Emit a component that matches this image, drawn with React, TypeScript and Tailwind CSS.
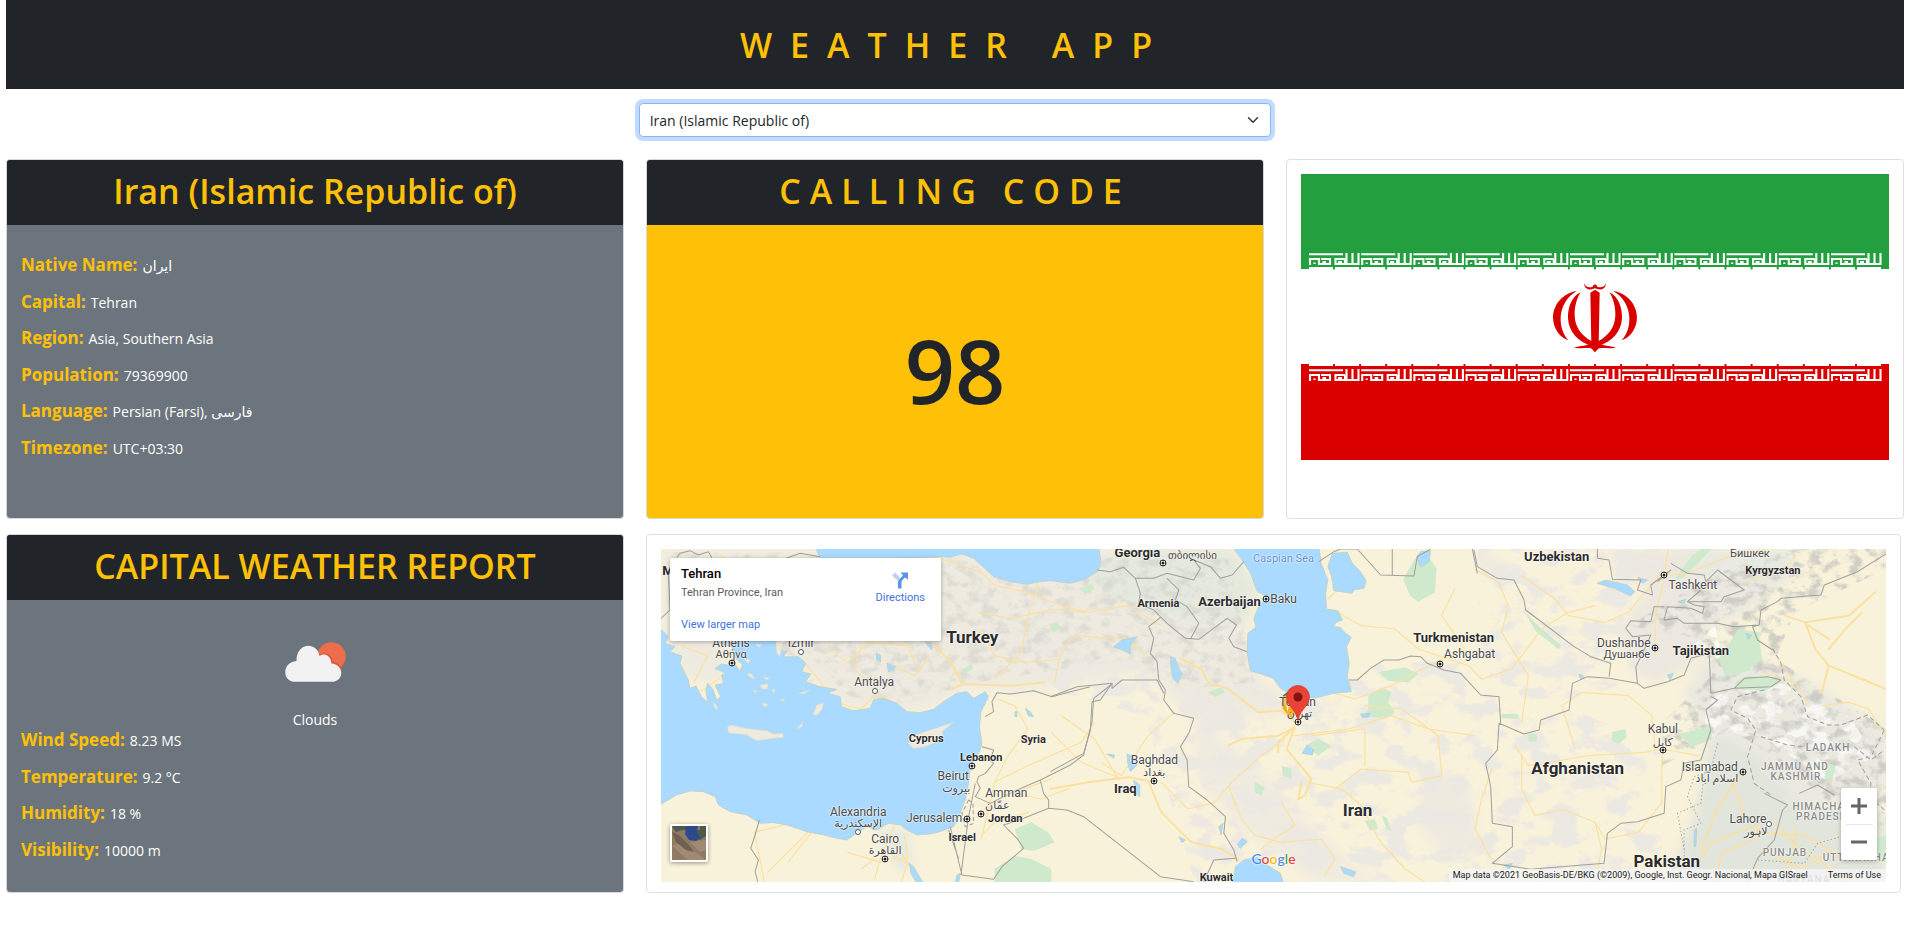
import { useState } from "react";

const countries = ["Iran (Islamic Republic of)", "Iraq", "Ireland", "Israel", "Italy"];

const facts = [
  ["Native Name:", "ایران"],
  ["Capital:", "Tehran"],
  ["Region:", "Asia, Southern Asia"],
  ["Population:", "79369900"],
  ["Language:", "Persian (Farsi), فارسی"],
  ["Timezone:", "UTC+03:30"],
];

const weather = [
  ["Wind Speed:", "8.23 MS"],
  ["Temperature:", "9.2 °C"],
  ["Humidity:", "18 %"],
  ["Visibility:", "10000 m"],
];

function Facts({ rows }: { rows: string[][] }) {
  return (
    <dl className="grid h-full auto-rows-fr text-sm leading-6 text-white">
      {rows.map(([name, value]) => (
        <div key={name} className="flex items-baseline gap-[5px]">
          <dt className="text-[17px] font-bold text-[#ffc107]">{name}</dt>
          <dd>{value}</dd>
        </div>
      ))}
    </dl>
  );
}

function CardTitle({ children, spaced = false }: { children: string; spaced?: boolean }) {
  return (
    <h2
      className={
        spaced
          ? "h-[65px] shrink-0 bg-[#212529] pt-2 text-center text-[34px] leading-[46px] font-semibold tracking-[9px] text-[#ffc107]"
          : "h-[65px] shrink-0 bg-[#212529] pt-2 text-center text-[34px] leading-[46px] font-semibold text-[#ffc107]"
      }
    >
      {children}
    </h2>
  );
}

/* One 52x12 repeat of the takbir border */
function Takbir({ x, y }: { x: number; y: number }) {
  return (
    <path
      transform={`translate(${x} ${y})`}
      fill="none"
      stroke="#fff"
      strokeWidth="2.1"
      d="M0 1.200H34M1 12V6H10V11M5.500 11V9.500M9 11H21V6H12M13.500 9H17M26.500 12V6H36M25.500 11H36V6M29 9H33M37.500 0V11H49.500V0M43.500 0V11"
    />
  );
}

function Flag() {
  const tiles = Array.from({ length: 11 }, (_, i) => 8 + i * 52.2);
  const ticks = Array.from({ length: 21 }, (_, i) => 32 + i * 26.1);
  return (
    <svg viewBox="0 0 588 286" className="block w-full" role="img" aria-label="Flag of Iran">
      <rect width="588" height="286" fill="#fff" />
      <path fill="#239f40" d="M0 0H588V95H580V93H8V95H0Z" />
      <path fill="#da0000" d="M0 286H588V190H580V192H8V190H0Z" />
      {ticks.map((x) => (
        <g key={x}>
          <rect x={x} y="92" width="2" height="3.4" fill="#239f40" />
          <rect x={x} y="190" width="2" height="4" fill="#da0000" />
        </g>
      ))}
      {tiles.map((x) => (
        <g key={x}>
          <Takbir x={x} y={79} />
          <Takbir x={x} y={195} />
        </g>
      ))}
      <g fill="#da0000" transform="translate(294 109) scale(.3333) translate(-285 -158)">
        {["", "translate(570 0) scale(-1 1)"].map((t) => (
          <g key={t} transform={t || undefined}>
            <path d="M230 182C182 190 159 229 159 262C160 296 180 321 205 330C188 311 181 288 182 260C184 228 200 200 230 182Z" />
            <path d="M242 186C215 198 203 232 204 264C206 306 235 334 274 347L276 333C244 316 225 290 224 256C223 230 230 204 242 186Z" />
            <path d="M253 158C251 176 268 182 285 174V163C280 161 281 166 278 169C268 173 255 171 253 158Z" />
            <path d="M222 352C240 345 262 349 277 335H285V366C280 361 277 356 273 354C257 352 241 355 222 352Z" />
            <path d="M285 178L271 187L274 340H285Z" />
          </g>
        ))}
      </g>
    </svg>
  );
}

function CloudIcon() {
  return (
    <svg viewBox="0 0 64 42" className="h-[42px] w-16" role="img" aria-label="Partly cloudy">
      <circle cx="48.500" cy="14.500" r="14.300" fill="#ec6e4c" />
      <path fill="#dc5434" d="M34 14L38 12C44 10 49 13 50 20C55 21 58 24 59 28L50 30L38 24Z" />
      <path
        fill="#f2f2f2"
        d="M11 39.700C-1 39 -1 20 13.500 19C13 0 34 -1 36.500 14C43 10 48 15 48.500 21.500C60 22 62 37 51 39.700Z"
      />
    </svg>
  );
}

/* Coordinates inside each region group are relative to that region's own origin. */
function MapDrawing() {
  return (
    <svg viewBox="0 0 3672 999" preserveAspectRatio="none" className="block h-full w-full" aria-hidden="true">
      <defs>
        <filter id="relief" x="0" y="0" width="1" height="1" colorInterpolationFilters="sRGB">
          <feTurbulence type="fractalNoise" baseFrequency="0.025 0.035" numOctaves="5" seed="8" />
          <feColorMatrix values="0 0 0 0 .78  0 0 0 0 .78  0 0 0 0 .76  0 4 0 0 -1.85" />
          <feComposite in2="SourceGraphic" operator="in" />
        </filter>
        <filter id="snow" x="0" y="0" width="1" height="1" colorInterpolationFilters="sRGB">
          <feTurbulence type="fractalNoise" baseFrequency="0.02 0.03" numOctaves="5" seed="3" />
          <feColorMatrix values="0 0 0 0 1  0 0 0 0 1  0 0 0 0 1  0 6 0 0 -2.9" />
          <feComposite in2="SourceGraphic" operator="in" />
        </filter>
        <filter id="patches" x="0" y="0" width="1" height="1" colorInterpolationFilters="sRGB">
          <feTurbulence type="fractalNoise" baseFrequency="0.012 0.018" numOctaves="4" seed="21" />
          <feColorMatrix values="0 0 0 0 .925  0 0 0 0 .91  0 0 0 0 .885  0 7 0 0 -3.4" />
          <feComposite in2="SourceGraphic" operator="in" />
        </filter>
        <filter id="soft">
          <feGaussianBlur stdDeviation="18" />
        </filter>
      </defs>
      <rect width="3672" height="999" fill="#f9f2da" />

      {/* Terrain tint */}
      <g filter="url(#soft)">
        <path fill="#eeeae0" d="M0 0H1500L1640 90L1760 250L1780 380L1860 430L2040 470L1900 500L1760 500L1640 560L1560 480L1450 370L1330 390L1100 430L930 420L780 490L560 480L430 380L340 280L200 240L180 400L80 400L0 260Z" />
        <path fill="#e4e8dd" d="M1240 60L1500 0H1720L1790 120L1760 220L1600 220L1450 180L1330 130Z" />
        <path fill="#efebe0" d="M1600 520L1760 620L1900 780L2080 950L2180 999H1960L1750 850L1600 680Z" />
        <path fill="#ece8df" d="M2820 0H3240L3420 60L3260 190L3140 240L3120 330L2990 400L2920 380L2880 230L2960 120Z" />
        <path fill="#eae9e0" d="M3060 430L3160 300L3300 330L3500 430L3672 540V760H3200L3120 640L3140 540Z" />
        <path fill="#e1e5db" d="M3160 560L3300 620L3400 760L3672 800V999H3010L3090 820L3120 700Z" />
        <path fill="#e6e9df" d="M3080 0H3400L3380 60L3240 120L3100 60ZM650 840H740L760 960H700Z" />
        <path fill="#eeeae0" d="M2460 0L2560 60L2520 90L2440 60ZM2300 640L2420 700L2460 900L2360 930L2260 820Z" />
      </g>
      <path filter="url(#patches)" fill="#000" d="M900 200L1700 380L2400 330L3000 600V999H1600L1450 500L1200 430Z" />
      <path filter="url(#patches)" fill="#000" d="M2450 0H3260L3050 330L2650 500L2450 400Z" />
      <path filter="url(#relief)" fill="#000" opacity=".8" d="M3000 520L3150 380L3120 270L2900 230L3050 140L3200 60L3400 0H3672V60L3400 190L3340 330L3450 400L3672 540V850L3500 760L3330 620L3200 540L3120 590L3000 650Z" />
      <path filter="url(#snow)" fill="#000" opacity=".7" d="M3130 450L3330 390L3560 500L3640 620L3500 700L3300 560L3130 560ZM3080 300L3160 230L3180 330Z" />
      <path filter="url(#relief)" fill="#000" opacity=".4" d="M30 10H440L900 30L1060 100L1450 0L1700 30L1780 400L1560 420L1400 330L950 400L700 470L560 440L450 330L60 260Z" />

      {/* Parks */}
      <g fill="#cfe9cc">
        <path d="M1060 840L1110 820L1160 850L1180 880L1120 905L1080 900ZM1000 960L1060 920L1110 930L1170 960V999H1000Z" />
        <path d="M2225 90L2260 30L2300 20L2325 60L2320 130L2270 158L2245 140Z" />
        <path d="M2150 370L2230 355L2270 375L2240 400L2180 395ZM2120 440L2160 415L2190 430L2180 460L2200 490L2170 510L2110 500L2120 480Z" />
        <path d="M1930 590L1970 570L2010 590L1970 620ZM1860 650L1890 660L1890 690L1865 680ZM1780 700L1810 715L1800 740L1780 730Z" />
        <path d="M3170 330L3230 240L3290 250L3300 330L3250 370L3190 380ZM3220 400L3260 380L3330 390L3360 400L3310 425L3240 420Z" />
        <path d="M2850 550L2890 540L2895 565L2870 585L2850 575ZM3050 555L3150 530L3150 570L3090 595ZM2520 495L2570 495L2570 510L2520 508ZM2600 555H2625V578H2600Z" />
        <path d="M3040 90L3090 20L3120 0H3150L3100 50L3060 90ZM3580 880L3672 860V940L3620 930ZM3490 640L3520 650L3510 695L3490 690ZM2590 190L2640 240L2700 290L2690 300L2620 245Z" />
        <path d="M1165 225L1190 220L1195 240L1175 250ZM1260 120L1290 105L1300 120L1270 135ZM905 360L930 345L935 360L910 375ZM2110 815L2140 810L2150 840L2125 845ZM2160 800L2175 805L2190 845L2175 840ZM1640 430L1680 415L1690 430L1660 445Z" />
      </g>

      {/* Roads */}
      <g fill="none" stroke="#fbe1a0" strokeWidth="3.5" strokeLinejoin="round" strokeLinecap="round">
        <path strokeWidth="6" d="M870 420L905 405L1050 410L1150 400M900 400L870 340L810 280M1167 720L1280 700L1400 685L1460 695L1500 790L1590 880L1680 900L1730 930" />
        <path strokeWidth="6" d="M1560 330L1620 360L1640 400L1700 420L1790 490L1860 485L1900 520M1900 535L1850 560L1740 570L1700 590M1900 535L1850 580L1850 610M1900 535L1875 600L1950 690L1930 740L1910 750L1920 700" />
        <path d="M420 330L480 400L520 460L600 480L640 440L690 450M600 290L580 360L620 400M700 350L760 380L800 330M500 300L560 340L620 280L740 290L760 340M960 240L1000 320L1090 340L1200 330" />
        <path d="M840 30L960 70L1000 110L1100 130L1200 170L1280 190L1400 170L1500 230M960 190L1050 210L1170 180L1270 190M1100 20L1130 110L1100 200L1080 310L1000 390M1180 400L1200 300L1240 260L1400 270L1460 330" />
        <path d="M1010 450L1060 470L1100 540L1040 620L1000 700L980 790L960 870M1000 700L1100 650L1260 580L1300 520M970 780L1010 750L1170 690M1170 550L1260 640L1380 690M1050 730L1140 750L1220 720M960 860L1000 820L1100 790M380 940L500 790L700 820M310 999L280 850L400 820M320 970L450 840" />
        <path d="M700 830L660 920L640 990M700 920L760 960M640 930L600 960M670 930L740 930L730 860M690 870L740 940L720 999M660 940L560 910" />
        <path d="M1320 640L1380 680L1460 560L1540 490M1200 500L1300 570L1370 690M1500 700L1580 780L1660 760L1710 700L1800 620L1870 570M1700 710L1740 810L1780 860L1860 880L1980 870L2020 930L1990 980M1860 760L1900 830L1850 860L1800 900" />
        <path d="M1940 700L2040 720L2100 770L2150 870L2230 960L2290 999M2020 720L2100 660L2240 670L2250 700L2340 680L2330 560L2220 480L2110 470M1900 560L2060 540L2190 500L2300 540L2440 560M1950 560L2110 540L2110 650" />
        <path d="M2010 180L2100 230L2200 240L2270 300L2420 350L2460 390L2550 360L2640 240L2720 190L2800 170M2000 150L2090 60M2380 120L2340 200L2410 300L2280 360L2190 410L2080 450L2010 430M2440 60L2510 100L2540 170L2520 250L2600 380L2580 520" />
        <path d="M2580 80L2680 150L2720 200L2830 220L2900 190L3000 70M3020 0L3000 120L2980 200L2980 320M2990 70L3060 80L3180 30L3320 0M3250 100L3370 60L3400 20M2740 600L2700 470L2760 430L2900 440L2970 500L2980 590L3000 610" />
        <path d="M2560 590L2600 650L2780 620L2950 610L3000 600L3110 620M2580 620L2580 720L2620 800L2700 780L2800 820L2830 870L2930 850L3000 760L3000 620M2800 820L2820 900L2800 999M2490 660L2460 750L2440 840L2500 950" />
        <path strokeWidth="6" d="M3370 200L3430 220L3560 200L3640 130M3430 220L3460 300L3500 350L3600 390L3672 420M3440 230L3500 270M3500 300L3560 230L3600 190M3500 350L3480 430" />
        <path strokeWidth="5" d="M3210 690L3240 780L3290 840L3280 870L3180 910L3160 999M3280 830L3150 880L3110 940M3240 670L3160 790L3120 900M3340 820L3400 890L3480 940L3560 999M3290 850L3430 860L3530 920M3300 900L3420 960L3500 910M3360 999L3400 900L3400 830" />
        <path d="M3480 470L3560 460L3620 480L3672 560M3350 330L3390 390L3390 430M3300 370L3400 400L3440 470M80 230L200 100L300 80L400 120M60 290L140 320L100 400M200 370L130 420L110 430M180 20L260 60L400 40" />
      </g>

      {/* Seas and lakes */}
      <g fill="#aadaff" stroke="#b8cdb9" strokeWidth="2">
        <path
          transform="translate(-63 -57)"
          d="M50 285L85 320L75 340L105 350L90 365L125 378L120 400L145 450L150 475L168 468L185 500L203 518L197 480L203 460L220 480L230 510L242 500L225 465L250 460L245 435L257 430L225 415L245 402L262 405L280 395L300 424L307 405L287 385L275 350L230 335L200 310H430L405 340L412 360L440 365L430 380L475 380L497 400L485 425L512 432L497 455L540 470L590 478L562 490L600 500L605 530L640 542L690 535L700 510L730 505L770 520L800 545L840 548L880 538L910 515L950 490L980 485L1000 505L1035 485L1045 500L1022 545L1018 590L1025 640L1018 665L1000 690L990 720L985 760L975 810L960 850L940 890L900 905L870 912L830 915L800 900L780 885L745 880L710 900L680 890L650 910L620 930L590 925L550 915L500 905L440 885L400 878L360 880L320 855L270 845L235 825L225 800L190 785L150 783L110 795L50 830Z"
        />
        <path
          transform="translate(-63 -57)"
          d="M525 50L545 95L900 80L930 82L965 72L1000 85L1025 107L1060 140L1110 155L1160 163L1200 155L1230 152L1290 160L1330 150L1370 125L1382 95L1375 50Z"
        />
        <path
          transform="translate(1167 -57)"
          d="M545 50L575 90L600 130L620 185L650 200L625 228L610 265L616 292L592 310L590 370L600 422L640 435L668 445L690 475L715 490L740 500L790 505L850 490L903 485L890 440L896 400L888 350L902 322L880 305L870 292L850 290L855 278L876 270L862 242L828 237L825 190L832 150L812 100L805 50Z"
        />
        <path transform="translate(1167 -57)" d="M845 70L890 66L905 100L930 125L947 152L940 175L910 180L905 190L850 182L843 140L832 110Z" />
        <path transform="translate(1167 -57)" d="M545 1065L555 1010L580 990L620 982L650 1005L690 1030L700 1065Z" />
        <path transform="translate(1167 -57)" d="M190 350L215 330L260 320L240 345L240 372L215 360ZM360 380L375 385L380 408L395 430L382 460L368 445L362 410ZM230 672L250 680L260 705L240 725L232 700ZM755 670L770 645L790 660L785 675ZM1098 80L1110 65L1140 62L1135 95L1110 112ZM170 672L192 675L190 685ZM250 750L268 765V800L255 790ZM930 552L958 550L955 562H935ZM870 1010L915 1025L910 1040L880 1030ZM505 890L518 880L512 915ZM560 945L575 925L590 935L570 955ZM385 920L405 930L395 938Z" />
        <path transform="translate(2427 -57)" d="M378 160L405 150L470 165L492 185L480 198L430 175ZM500 142L530 150L515 160ZM620 215L645 208L640 220ZM825 310L842 315L832 328ZM325 432L340 440L330 450ZM100 1005L125 1000L115 1018ZM590 435L608 430L598 450ZM670 900L678 895L675 950L670 950Z" />
        <path transform="translate(-63 -57)" d="M708 370L720 375L722 395L710 390ZM740 400L765 410L760 420L745 425ZM855 335L875 340V360L865 350ZM1155 535L1170 545L1180 560L1165 558ZM1124 545H1130V560H1124ZM808 1000L820 1010L850 1060H830L812 1030ZM950 1035L960 1030L955 1060H945Z" />
      </g>

      {/* Islands */}
      <g transform="translate(-63 -57)" fill="#eeeade" stroke="#ded9bf" strokeWidth="1.5">
        <path d="M262 590L275 585L300 592L340 598L380 602L400 612L428 610L430 622L400 625L350 632L320 615L265 608Z" />
        <path d="M805 640L810 620L840 610L870 600L900 590L940 577L905 605L910 620L880 640L850 652L820 655Z" />
        <path d="M520 550L530 525L550 518L545 540L528 558ZM470 598L488 575L485 590ZM500 455L520 448L512 458ZM475 490L510 480L490 492ZM360 465L385 462L380 478L365 476ZM320 430L335 432L345 448L330 442ZM310 385L330 390L325 400ZM220 515L232 530L230 540L222 532ZM340 480L350 483L346 490ZM365 520L385 522L375 532ZM408 345L425 352L420 380L410 370ZM395 478L405 480L400 490ZM420 510L435 505L428 514ZM345 340L365 345L355 352ZM370 440L390 444L378 450Z" />
      </g>

      {/* National borders */}
      <g fill="none" stroke="#a09f9b" strokeWidth="3" strokeLinejoin="round">
        <path
          transform="translate(-63 -57)"
          d="M63 265L90 240L85 120L120 70L150 62L175 75L205 65L225 100M440 84L480 70L540 80M353 1055L345 1025L355 990L332 955L345 915L358 870M1035 560L1060 545L1055 515L1070 488L1110 492L1180 482L1235 500L1290 485L1350 470M1025 650L1060 660L1050 690L1060 700L1035 730L1015 740L1010 755L1020 775L1005 800L1050 820L1130 780L1200 750L1290 705L1330 675L1355 575L1360 505L1415 462M1200 750L1210 790L1225 810V835L1280 840L1330 860L1560 1040L1660 1055M930 890L965 1035L1060 1048L1085 1010L1150 955L1130 925L1090 885L1150 865L1225 835M1005 760L985 860L962 1035M925 900L955 985"
        />
        <path
          transform="translate(1167 -57)"
          d="M140 120L180 125L220 112L255 145L310 145L350 130L430 150L450 115L430 90L480 110L510 145L545 135L580 95M255 145L270 190L265 220L310 240L350 280L405 325L445 328L530 265L558 285L535 325L550 350L590 365M350 145L385 180L375 210L410 230L445 280L420 328M330 262L295 290L310 325L300 370L320 395L325 450L345 480L340 510L370 550L430 565L415 610L390 650L410 690L415 770L470 810L525 860L520 910L550 960L560 995M340 490L320 450L270 450L215 450L185 475L185 460L80 470L0 500M185 460L150 510L125 515L120 600L100 670L0 725M460 1055L490 990L555 985M805 95L850 65L870 57H920L990 135L1090 138L1100 80L1140 57M895 450H920L960 415L1000 390L1045 390L1080 378L1110 380L1130 400L1180 420L1230 430L1290 495L1345 500L1350 580M1265 57L1280 130M1025 57V135"
        />
        <path
          transform="translate(2427 -57)"
          d="M10 60L20 110L80 145L130 150L160 210L165 240L310 350L360 380L420 400L415 440M380 57V85L415 90L425 148L510 150L500 180L545 195L540 165L600 120L560 155M600 100L650 130L700 135L705 155L740 120L820 180L760 200L750 215L650 215L690 180M650 215L670 225L700 230L695 250L660 235L590 230L580 270L620 265L640 280H740L790 290L865 285L870 240L920 215L930 205L1050 195L1060 165L1160 125L1245 72M540 275L550 230H580M540 275L480 272L465 295L485 320L540 315L520 360L495 410L500 460M865 285L845 290L860 330L905 360M85 580L160 612L205 600L210 570L295 540L305 460L350 440L415 445L500 460L520 475L590 455L640 435L660 385L715 370L720 490L790 475L900 470L930 450L890 440L820 445L790 475M720 500L740 510L705 540L720 600L690 690L640 700L630 750L585 770L580 850L500 875L450 880L410 910L400 1000L180 1018L65 1000L125 950V890L65 880L60 770L45 700L80 660L85 580M935 840L910 930L860 985L830 1055M880 790L950 825L935 840M985 790L1040 765L1090 795"
        />
        <g transform="translate(2427 -57)" strokeDasharray="14 9">
          <path d="M905 355L930 400L940 450L990 500L1010 560L1070 585L1110 585L1190 555L1240 600M880 480L800 500L780 540L830 565L855 600L830 680L850 760L900 795M870 620L950 645L1000 650M1150 650L1200 690L1240 660M1240 600L1200 680L1160 690L1200 760L1195 800L1240 840" />
          <path strokeDasharray="4 7" d="M740 640L720 720L670 740L650 800L690 880L640 900L640 1000M700 730L690 820L620 850L640 960M860 990L1000 1000L1040 940L1110 920" />
        </g>
        <path transform="translate(-63 -57)" strokeDasharray="12 8" d="M985 810L965 850L975 890L1000 880L998 820Z" />
      </g>

      {/* Neighbouring place pin */}
      <g transform="translate(1167 -57)">
        <path fill="#188038" d="M695 498L712 485L725 495V510Z" />
        <path fill="#f9ab1b" d="M718 568C712 545 693 545 693 518C695 500 705 492 725 492L740 550Z" />
        <path fill="#fff" d="M706 512L712 530L718 514L711 545Z" />
      </g>
    </svg>
  );
}

function Pin() {
  return (
    <svg viewBox="0 0 24 36" className="h-9 w-6" role="img" aria-label="Tehran marker">
      <path
        fill="#ea4335"
        stroke="#c5352a"
        strokeWidth=".6"
        d="M12 .5C5.500 .5 .5 5.500 .5 12C.5 16 2.200 18.500 4.500 21.500C8 26 10.500 29 12 35.500C13.500 29 16 26 19.500 21.500C21.800 18.500 23.500 16 23.500 12C23.500 5.500 18.500 .5 12 .5Z"
      />
      <circle cx="12" cy="12" r="4.500" fill="#811411" />
    </svg>
  );
}

const kinds = {
  big: "text-[17px] font-bold text-[#2b2b2b]",
  country: "text-[13px] font-bold text-[#2b2b2b]",
  small: "text-[11px] font-bold text-[#2b2b2b]",
  city: "text-[12px] text-[#4a4a4a]",
  local: "text-[11px] text-[#4a4a4a]",
  region: "text-[10px] font-medium text-[#8b8b8b] tracking-[1px]",
  sea: "text-[11px] text-[#5b8fd9]",
};

type Place = [string, number, number, keyof typeof kinds];

/* Name, centre x and y on a 1224x333 map, kind of label */
const places: Place[] = [
  ["M", 7, 21, "country"],
  ["Athens", 70, 94, "city"],
  ["Αθήνα", 70, 105, "local"],
  ["İzmir", 140, 94, "city"],
  ["Antalya", 213, 133, "city"],
  ["Turkey", 311, 88, "big"],
  ["Cyprus", 265, 189, "small"],
  ["Syria", 372, 190, "small"],
  ["Lebanon", 320, 208, "small"],
  ["Beirut", 292, 227, "city"],
  ["بيروت", 295, 239, "local"],
  ["Amman", 345, 244, "city"],
  ["عمّان", 336, 256, "local"],
  ["Jordan", 344, 269, "small"],
  ["Jerusalem", 273, 269, "city"],
  ["Israel", 301, 288, "small"],
  ["Alexandria", 197, 263, "city"],
  ["الإسكندرية", 197, 274, "local"],
  ["Cairo", 224, 290, "city"],
  ["القاهرة", 224, 301, "local"],
  ["Georgia", 476, 3, "country"],
  ["თბილისი", 531, 6, "local"],
  ["Caspian Sea", 622, 9, "sea"],
  ["Armenia", 497, 54, "small"],
  ["Azerbaijan", 568, 52, "country"],
  ["Baku", 622, 50, "city"],
  ["Turkmenistan", 792, 88, "country"],
  ["Ashgabat", 808, 105, "city"],
  ["Tehran", 636, 153, "city"],
  ["تهران", 638, 164, "local"],
  ["Baghdad", 493, 211, "city"],
  ["بغداد", 493, 223, "local"],
  ["Iraq", 464, 239, "country"],
  ["Iran", 696, 261, "big"],
  ["Kuwait", 555, 328, "small"],
  ["Uzbekistan", 895, 7, "country"],
  ["Бишкек", 1088, 4, "local"],
  ["Kyrgyzstan", 1111, 21, "small"],
  ["Tashkent", 1031, 36, "city"],
  ["Dushanbe", 962, 94, "city"],
  ["Душанбе", 965, 105, "local"],
  ["Tajikistan", 1039, 101, "country"],
  ["Kabul", 1001, 180, "city"],
  ["كابل", 1001, 193, "local"],
  ["Afghanistan", 916, 219, "big"],
  ["Islamabad", 1048, 218, "city"],
  ["اسلام آباد", 1055, 229, "local"],
  ["LADAKH", 1166, 199, "region"],
  ["JAMMU AND", 1133, 218, "region"],
  ["KASHMIR", 1134, 228, "region"],
  ["HIMACHAL", 1160, 258, "region"],
  ["PRADESH", 1160, 268, "region"],
  ["Lahore", 1086, 270, "city"],
  ["لاہور", 1094, 282, "local"],
  ["PUNJAB", 1123, 304, "region"],
  ["UTTARAKHAND", 1202, 309, "region"],
  ["HARYANA", 1142, 331, "region"],
  ["Pakistan", 1005, 312, "big"],
];

const capitals = [
  [71, 114], [311, 217], [320, 265], [306, 270], [224, 310], [502, 14], [605, 50], [778, 115],
  [636, 173], [493, 232], [1002, 26], [993, 99], [1001, 201], [1081, 223],
];
const cities = [[140, 103], [214, 142], [197, 283], [1107, 275]];

const at = (x: number, y: number) => ({ left: `${(x / 1224) * 100}%`, top: `${(y / 333) * 100}%` });

function MapView() {
  return (
    <div className="relative h-[333px] overflow-hidden [font-family:Roboto,'DejaVu_Sans',sans-serif]">
      <MapDrawing />
      {places.map(([name, x, y, kind]) => (
        <span
          key={name}
          style={at(x, y)}
          className={`absolute -translate-x-1/2 -translate-y-1/2 leading-none whitespace-nowrap [text-shadow:0_0_2px_#fff,0_0_2px_#fff] ${kinds[kind]}`}
        >
          {name}
        </span>
      ))}
      {capitals.map(([x, y]) => (
        <span
          key={x}
          style={at(x, y)}
          className="absolute size-[7px] -translate-1/2 rounded-full border border-[#333] bg-[#222] shadow-[inset_0_0_0_1px_#fff]"
        />
      ))}
      {cities.map(([x, y]) => (
        <span key={x} style={at(x, y)} className="absolute size-[6px] -translate-1/2 rounded-full border border-[#555] bg-white" />
      ))}
      <span style={at(636, 172)} className="absolute -translate-x-1/2 -translate-y-full">
        <Pin />
      </span>

      <div className="absolute top-[9px] left-[9px] flex h-[83px] w-[271px] justify-between rounded-xs bg-white pt-2 pr-4 pl-[11px] shadow-[0_1px_4px_rgba(0,0,0,.3)]">
        <div className="flex flex-col">
          <strong className="text-[13px] leading-4 font-medium text-black">Tehran</strong>
          <span className="mt-[3px] text-[11px] leading-4 text-[#5b5b5b]">Tehran Province, Iran</span>
          <a href="#map" className="mt-4 text-[11px] leading-4 text-[#4272db]">View larger map</a>
        </div>
        <a href="#directions" className="flex flex-col items-center pt-[5px] text-[11px] leading-4 text-[#4272db]">
          <svg viewBox="0 0 16 17" className="mb-px h-[18px] w-4" aria-hidden="true">
            <path fill="#b9d0f7" d="M0 4L3 1L8 6L6 9.500Z" />
            <path fill="#5b95e8" d="M6 17V11C6 9 7 8 8 7L11 4L8.500 1H16V8L13 6L10.500 8.500C9.500 9.500 9.500 10 9.500 12V17Z" />
          </svg>
          Directions
        </a>
      </div>

      <button
        type="button"
        aria-label="Show satellite imagery"
        className="absolute bottom-5 left-[9px] size-[38px] overflow-hidden rounded-xs border-2 border-white shadow-[0_1px_4px_rgba(0,0,0,.4)]"
      >
        <svg viewBox="0 0 34 34" className="block size-full" aria-hidden="true">
          <rect width="34" height="34" fill="#8f7a66" />
          <path fill="#4b5a4a" d="M0 0H14L16 12L28 14L34 10V0H28V4H10L4 6Z" />
          <path fill="#a08a74" d="M0 20L10 16L34 34H16ZM18 16L34 14V24L28 26Z" />
          <path fill="#6e6152" d="M0 6L8 10L16 18L22 26L14 24L4 16Z" />
          <path fill="#2c4a8c" d="M14 0H26L25 6L28 12L24 15L17 14L13 8Z" />
        </svg>
      </button>

      <div className="absolute right-[9px] bottom-[22px] flex h-[72px] w-9 flex-col items-center rounded-xs bg-white shadow-[0_1px_4px_rgba(0,0,0,.3)]">
        <button type="button" aria-label="Zoom in" className="grid w-full flex-1 place-items-center">
          <svg viewBox="0 0 16 16" className="size-4" aria-hidden="true">
            <path stroke="#666" strokeWidth="3" d="M8 0V16M0 8H16" />
          </svg>
        </button>
        <span className="h-px w-[27px] bg-[#e6e6e6]" />
        <button type="button" aria-label="Zoom out" className="grid w-full flex-1 place-items-center">
          <svg viewBox="0 0 16 16" className="size-4" aria-hidden="true">
            <path stroke="#666" strokeWidth="3" d="M0 8H16" />
          </svg>
        </button>
      </div>

      <span
        style={at(612, 310)}
        className="absolute -translate-1/2 text-[14px] leading-none font-medium [font-family:Lato,sans-serif] [text-shadow:0_0_2px_#fff,0_0_2px_#fff]"
      >
        <span className="text-[#4285f4]">G</span>
        <span className="text-[#ea4335]">o</span>
        <span className="text-[#fbbc05]">o</span>
        <span className="text-[#4285f4]">g</span>
        <span className="text-[#34a853]">l</span>
        <span className="text-[#ea4335]">e</span>
      </span>

      <div className="absolute right-0 bottom-0 flex h-[13px] items-center gap-5 bg-[#f5f5f5]/80 pr-[5px] pl-1 text-[9px] leading-none text-[#222]">
        <span>Map data ©2021 GeoBasis-DE/BKG (©2009), Google, Inst. Geogr. Nacional, Mapa GISrael</span>
        <a href="#terms">Terms of Use</a>
      </div>
    </div>
  );
}

export default function App() {
  const [country, setCountry] = useState(countries[0]);
  return (
    <div className="px-[6px] [font-family:'Open_Sans','Noto_Sans','DejaVu_Sans',sans-serif] text-[#212529]">
      <header className="flex h-[89px] items-center justify-center bg-[#212529]">
        <h1 className="text-[34px] leading-10 font-semibold tracking-[18px] text-[#ffc107]">WEATHER APP</h1>
      </header>

      <div className="relative mx-auto mt-[14px] w-1/3">
        <select
          aria-label="Country"
          value={country}
          onChange={(e) => setCountry(e.target.value)}
          className="block h-[34px] w-full appearance-none rounded border border-[#86b7fe] bg-white px-[10px] pt-px text-sm text-[#212529] shadow-[0_0_0_4px_#c2dbfe] outline-none"
        >
          {countries.map((c) => (
            <option key={c}>{c}</option>
          ))}
        </select>
        <svg viewBox="0 0 16 16" className="pointer-events-none absolute top-[11px] right-3 size-3" aria-hidden="true">
          <path fill="none" stroke="#343a40" strokeWidth="2" strokeLinecap="round" strokeLinejoin="round" d="M2 5l6 6 6-6" />
        </svg>
      </div>

      <main className="mt-[22px] grid grid-cols-3 gap-x-[22px] gap-y-[15px]">
        <section className="flex h-[360px] flex-col overflow-hidden rounded border border-[#d5d8da] bg-[#6c757d]">
          <CardTitle>{country}</CardTitle>
          <div className="mx-[14px] mt-7 h-[219px]">
            <Facts rows={facts} />
          </div>
        </section>

        <section className="flex h-[360px] flex-col overflow-hidden rounded border border-[#d5d8da] bg-[#ffc107]">
          <CardTitle spaced>CALLING CODE</CardTitle>
          <p className="flex flex-1 items-center justify-center pb-1 text-[88px] leading-none font-semibold">98</p>
        </section>

        <section className="h-[360px] rounded border border-[#dfdfdf] bg-white p-[14px]">
          <Flag />
        </section>

        <section className="flex h-[359px] flex-col overflow-hidden rounded border border-[#d5d8da] bg-[#6c757d]">
          <CardTitle>CAPITAL WEATHER REPORT</CardTitle>
          <div className="mt-[42px] flex flex-col items-center gap-6 text-sm leading-6 text-white">
            <CloudIcon />
            <p>Clouds</p>
          </div>
          <div className="mx-[14px] -mt-1 h-[146px]">
            <Facts rows={weather} />
          </div>
        </section>

        <section className="col-span-2 mr-[3px] h-[359px] rounded border border-[#dfdfdf] bg-white p-[14px] pb-0">
          <MapView />
        </section>
      </main>
    </div>
  );
}
